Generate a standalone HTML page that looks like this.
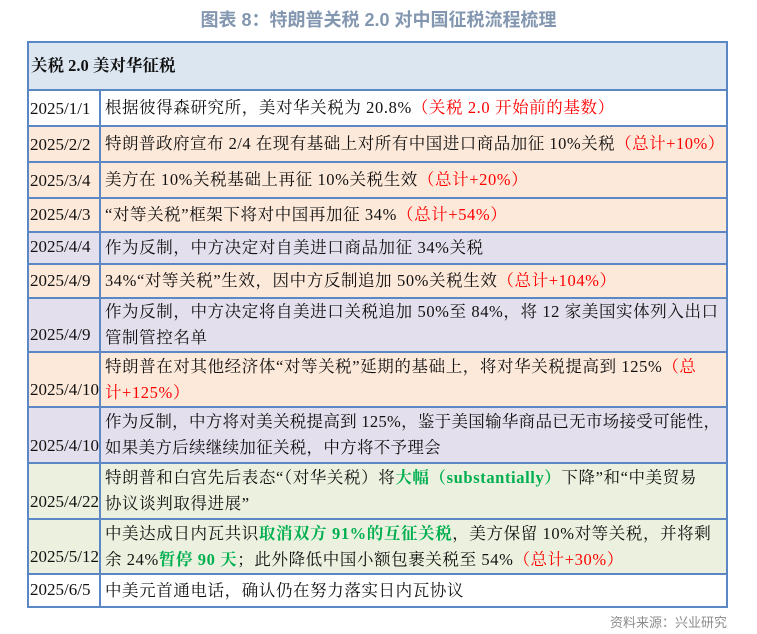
<!DOCTYPE html>
<html><head><meta charset="utf-8"><style>
body{margin:0;width:757px;height:634px;background:#fff;position:relative;overflow:hidden;font-family:"Liberation Serif","Noto Serif CJK SC",serif;color:#111;}
.title{position:absolute;top:6px;left:0;width:757px;text-align:center;font-family:"Liberation Sans","Noto Sans CJK SC",sans-serif;font-weight:bold;font-size:18px;color:#8497b0;}
table{position:absolute;left:27px;top:41px;width:701px;border-collapse:collapse;font-size:16.5px;}
td{border:2px solid #5b87c5;padding:0 0 0 4px;line-height:26px;}
td.d{width:67px;padding:0 0 3px 1px;vertical-align:bottom;font-size:17px;white-space:nowrap;}
td.c{padding-left:4px;padding-right:0;vertical-align:middle;letter-spacing:0.6px;white-space:nowrap;overflow:hidden;max-width:620px;}
.r{color:#ff0000}.g{color:#00b050;font-weight:bold}
.w{background:#fff}.p{background:#fde9d9}.l{background:#e4dfec}.gr{background:#ebf1de}.h{background:#dce6f1}
.src{position:absolute;right:30px;top:612px;font-family:"Liberation Sans","Noto Sans CJK SC",sans-serif;font-size:13px;color:#8c8c8c;}
</style></head><body>
<div class="title">图表 8：特朗普关税 2.0 对中国征税流程梳理</div>
<table>
<tr class="h" style="height:48px"><td colspan="2" style="font-weight:bold;padding-left:2px">关税 2.0 美对华征税</td></tr>
<tr class="w" style="height:36px"><td class="d">2025/1/1</td><td class="c">根据彼得森研究所，美对华关税为 20.8%<span class="r">（关税 2.0 开始前的基数）</span></td></tr>
<tr class="p" style="height:36px"><td class="d">2025/2/2</td><td class="c" style="letter-spacing:0.5px">特朗普政府宣布 2/4 在现有基础上对所有中国进口商品加征 10%关税<span class="r">（总计+10%）</span></td></tr>
<tr class="p" style="height:36px"><td class="d">2025/3/4</td><td class="c">美方在 10%关税基础上再征 10%关税生效<span class="r">（总计+20%）</span></td></tr>
<tr class="p" style="height:34px"><td class="d">2025/4/3</td><td class="c">“对等关税”框架下将对中国再加征 34%<span class="r">（总计+54%）</span></td></tr>
<tr class="l" style="height:32px"><td class="d">2025/4/4</td><td class="c">作为反制，中方决定对自美进口商品加征 34%关税</td></tr>
<tr class="p" style="height:34px"><td class="d">2025/4/9</td><td class="c">34%“对等关税”生效，因中方反制追加 50%关税生效<span class="r">（总计+104%）</span></td></tr>
<tr class="l" style="height:51px"><td class="d">2025/4/9</td><td class="c">作为反制，中方决定将自美进口关税追加 50%至 84%，将 12 家美国实体列入出口<br>管制管控名单</td></tr>
<tr class="p" style="height:55px"><td class="d">2025/4/10</td><td class="c">特朗普在对其他经济体“对等关税”延期的基础上，将对华关税提高到 125%<span class="r">（总<br>计+125%）</span></td></tr>
<tr class="l" style="height:56px"><td class="d">2025/4/10</td><td class="c" style="letter-spacing:0.3px">作为反制，中方将对美关税提高到 125%，鉴于美国输华商品已无市场接受可能性，<br>如果美方后续继续加征关税，中方将不予理会</td></tr>
<tr class="gr" style="height:56px"><td class="d">2025/4/22</td><td class="c">特朗普和白宫先后表态“（对华关税）将<span class="g">大幅（substantially）</span>下降”和“中美贸易<br>协议谈判取得进展”</td></tr>
<tr class="gr" style="height:55px"><td class="d">2025/5/12</td><td class="c">中美达成日内瓦共识<span class="g">取消双方 91%的互征关税</span>，美方保留 10%对等关税，并将剩<br>余 24%<span class="g">暂停 90 天</span>；此外降低中国小额包裹关税至 54%<span class="r">（总计+30%）</span></td></tr>
<tr class="w" style="height:33px"><td class="d">2025/6/5</td><td class="c">中美元首通电话，确认仍在努力落实日内瓦协议</td></tr>
</table>
<div class="src">资料来源：兴业研究</div>
</body></html>
